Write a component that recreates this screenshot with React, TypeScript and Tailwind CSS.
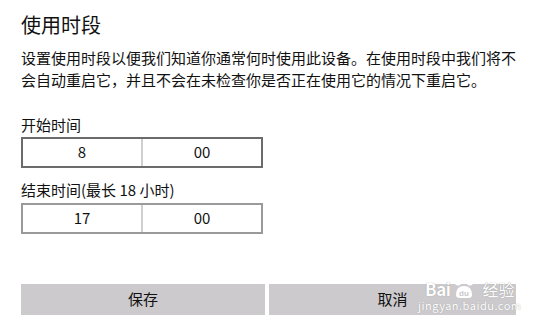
import React from "react";

const font = { fontFamily: '"Noto Sans CJK SC", "Liberation Sans", sans-serif' };

function TimeBox({ hour, minute, focused }: { hour: string; minute: string; focused?: boolean }) {
  return (
    <div
      className={`flex h-[31px] w-[242px] border-2 bg-white ${focused ? "border-[#6b6b6b]" : "border-[#9a9a9a]"}`}
    >
      <div className="flex flex-1 items-center justify-center border-r-2 border-[#cfcfcf] text-[15px] text-[#111]">
        {hour}
      </div>
      <div className="flex flex-1 items-center justify-center text-[15px] text-[#111]">{minute}</div>
    </div>
  );
}

function Watermark() {
  return (
    <div className="pointer-events-none absolute left-[418px] top-[275px] flex flex-col items-center text-white">
      <div className="flex items-end gap-[2px]">
        <span className="text-[17px] font-bold leading-[20px] tracking-tight [text-shadow:0_0_1px_#8a8a8a]">Bai</span>
        <svg width="22" height="24" viewBox="0 0 22 24">
          <circle cx="5" cy="7" r="2.6" fill="none" stroke="#fff" strokeWidth="1.6" />
          <circle cx="11" cy="4" r="2.6" fill="none" stroke="#fff" strokeWidth="1.6" />
          <circle cx="17" cy="7" r="2.6" fill="none" stroke="#fff" strokeWidth="1.6" />
          <path d="M3 20 Q3 11 11 11 Q19 11 19 20 Q19 23 15 23 L7 23 Q3 23 3 20 Z" fill="#fff" />
          <text x="11" y="21" textAnchor="middle" fontSize="8" fontWeight="bold" fill="#c9c8cb" fontFamily="Liberation Sans, sans-serif">du</text>
        </svg>
        <span className="ml-[6px] text-[16px] leading-[20px] [text-shadow:0_0_1px_#8a8a8a]">经验</span>
      </div>
      <span className="text-[11px] leading-[13px] tracking-[0.5px] [text-shadow:0_0_1px_#999]">jingyan.baidu.com</span>
    </div>
  );
}

export default function App() {
  return (
    <div className="relative h-[329px] w-[540px] overflow-hidden bg-white" style={font}>
      <div className="flex flex-col pl-[21px] pt-[11px]">
        <h1 className="text-[20px] leading-[28px] text-[#111]">使用时段</h1>
        <p className="mt-[8px] w-[500px] text-[15px] leading-[22px] text-[#111]">
          设置使用时段以便我们知道你通常何时使用此设备。在使用时段中我们将不会自动重启它，并且不会在未检查你是否正在使用它的情况下重启它。
        </p>
        <label className="mt-[23px] text-[15px] leading-[22px] text-[#111]">开始时间</label>
        <div className="mt-[1px]">
          <TimeBox hour="8" minute="00" focused />
        </div>
        <label className="mt-[11px] text-[15px] leading-[22px] text-[#111]">结束时间(最长 18 小时)</label>
        <div className="mt-[2px]">
          <TimeBox hour="17" minute="00" />
        </div>
        <div className="mt-[50px] flex gap-[4px]">
          <button className="h-[31px] w-[244px] bg-[#cccacd] text-[15px] text-[#111]">保存</button>
          <button className="h-[31px] w-[247px] bg-[#cccacd] text-[15px] text-[#111]">取消</button>
        </div>
      </div>
      <Watermark />
    </div>
  );
}
